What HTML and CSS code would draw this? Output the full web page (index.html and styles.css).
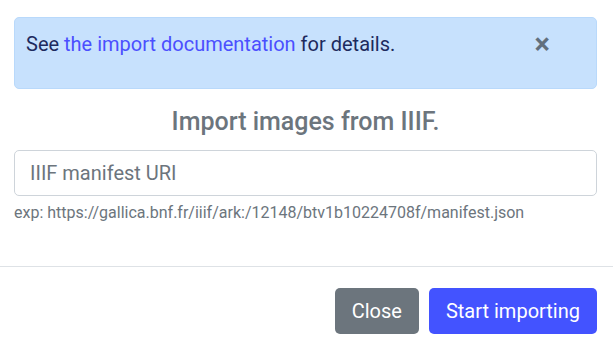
FILE: index.html
```html
<!DOCTYPE html>
<html lang="en">

<head>
  <meta charset="UTF-8">
  <meta name="viewport" content="width=device-width, initial-scale=1.0">
  <title>Import images from IIIF</title>
  <link rel="stylesheet" href="styles.css">
</head>

<body>
  <div class="modal-body">
    <div class="alert">
      <p>See <a href="#">the import documentation</a> for details.</p>
      <button class="close" type="button">&times;</button>
    </div>

    <h5 class="modal-title">Import images from IIIF.</h5>

    <input class="form-control" type="text" placeholder="IIIF manifest URI">
    <small class="form-text">exp: https://gallica.bnf.fr/iiif/ark:/12148/btv1b10224708f/manifest.json</small>
  </div>

  <!-- footer -->
  <div class="modal-footer">
    <button class="btn btn-secondary" type="button">Close</button>
    <button class="btn btn-primary" type="button">Start importing</button>
  </div>
</body>

</html>
```

FILE: styles.css
```css
body {
  font-family: Roboto, "Liberation Sans", Arial, sans-serif;
  margin: 0;
  padding: 0;
  background-color: #fff;
  color: #212529;
}

.modal-body {
  padding: 17px 16px 0 14px;
}

.alert {
  position: relative;
  background-color: #c7e1fd;
  border: 1px solid #b9d9fb;
  border-radius: 5px;
  color: #1d2a5e;
  padding: 11px 60px 11px 11px;
  font-size: 20px;
}

.alert p {
  margin: 0 0 18px 0;
  line-height: 30px;
}

.alert a {
  color: #4b4fff;
  text-decoration: none;
}

.close {
  position: absolute;
  right: 46px;
  top: 12px;
  padding: 0;
  border: none;
  background: transparent;
  font-family: Roboto, "Liberation Sans", Arial, sans-serif;
  font-size: 29px;
  font-weight: bold;
  line-height: 29px;
  color: #000;
  opacity: .5;
  cursor: pointer;
}

.modal-title {
  margin: 18px 0 14px 0;
  text-align: center;
  font-size: 25px;
  font-weight: 500;
  line-height: 29px;
  color: #6c757d;
}

.form-control {
  display: block;
  box-sizing: border-box;
  width: 100%;
  height: 46px;
  padding: 0 15px;
  font-family: Roboto, "Liberation Sans", Arial, sans-serif;
  font-size: 20px;
  color: #495057;
  border: 1px solid #ced4da;
  border-radius: 5px;
  outline: none;
}

.form-control::placeholder {
  color: #6c757d;
}

.form-text {
  display: block;
  margin-top: 5px;
  font-size: 16px;
  line-height: 24px;
  color: #6c757d;
}

.modal-footer {
  margin-top: 41px;
  border-top: 1px solid #dee2e6;
  display: flex;
  justify-content: flex-end;
  gap: 10px;
  padding: 21px 16px 0 0;
}

.btn {
  height: 46px;
  padding: 0 16px;
  font-family: Roboto, "Liberation Sans", Arial, sans-serif;
  font-size: 20px;
  border: 1px solid transparent;
  border-radius: 5px;
  color: #fff;
  cursor: pointer;
}

.btn-secondary {
  background-color: #6c757d;
}

.btn-primary {
  background-color: #4353ff;
}
```
